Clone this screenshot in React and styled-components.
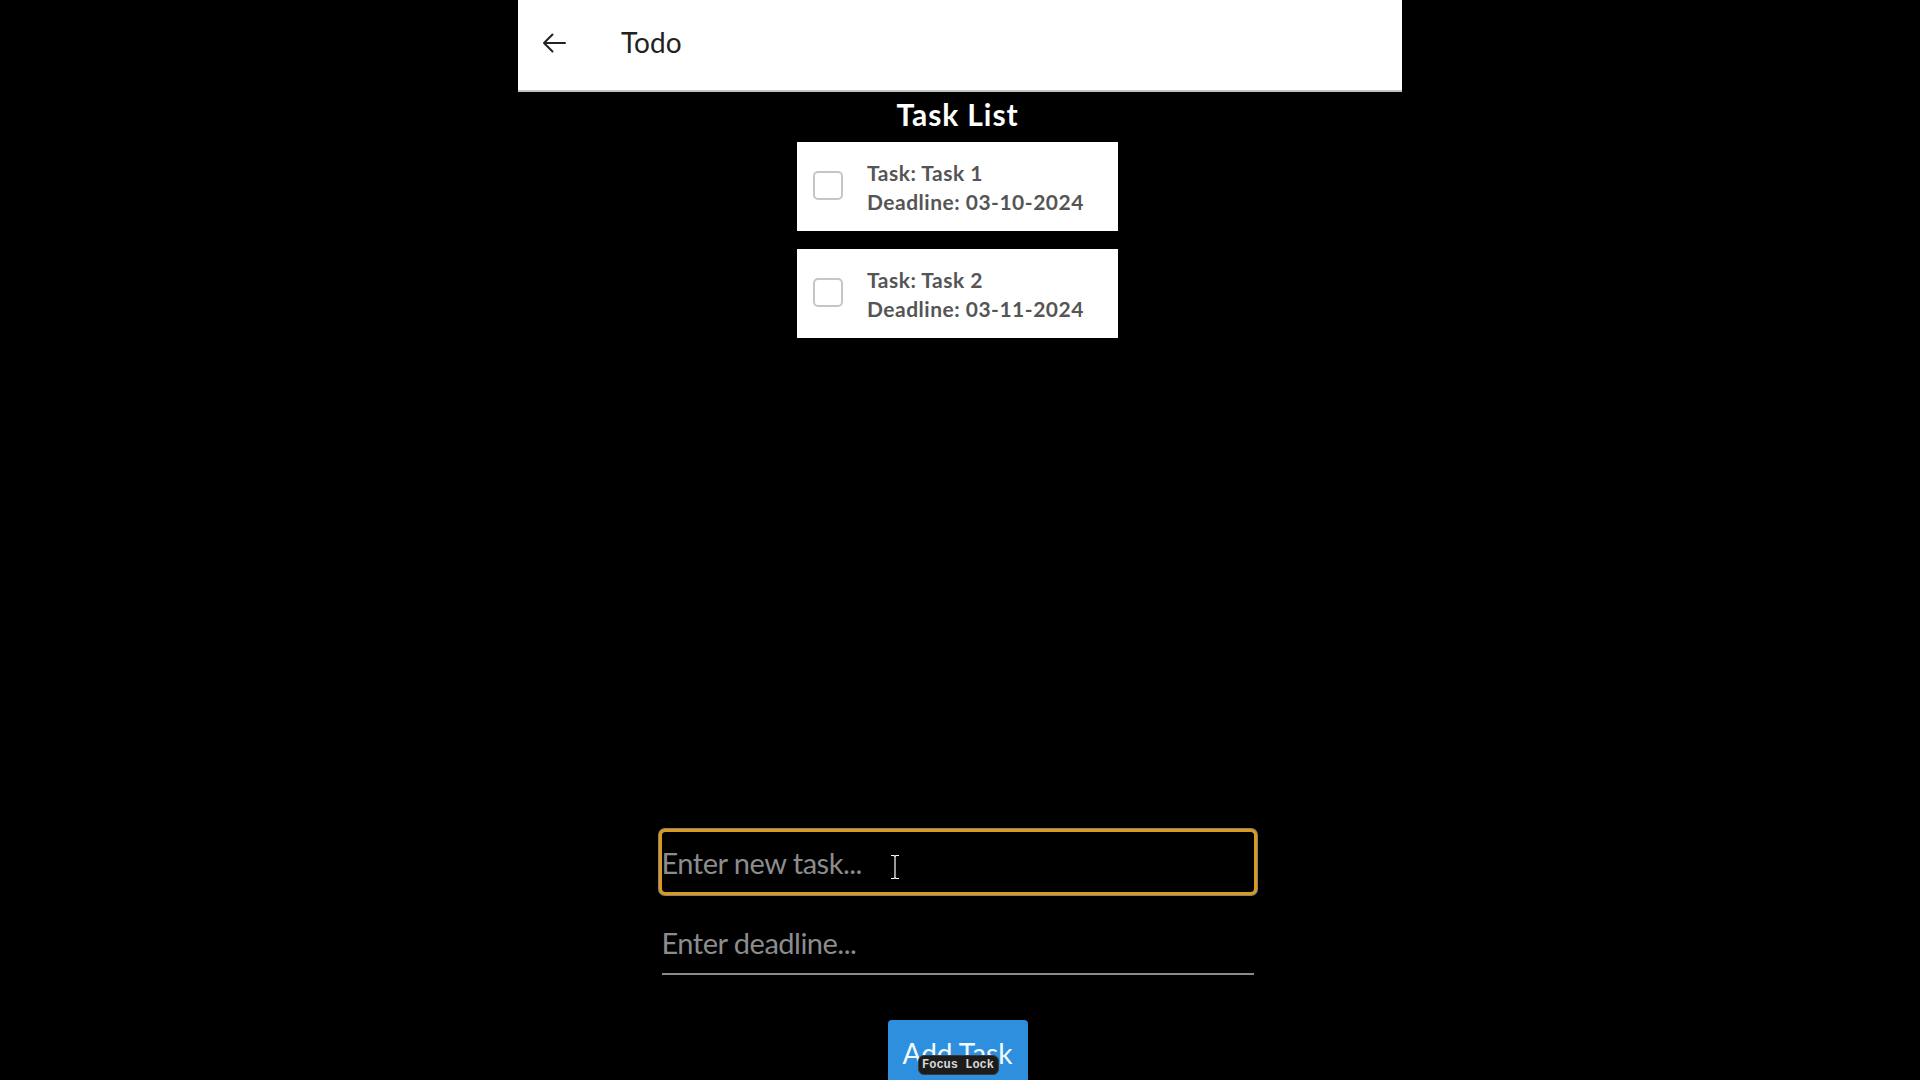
import React, { useState } from 'react';
import styled, { createGlobalStyle } from 'styled-components';

const GlobalStyle = createGlobalStyle`
  html, body {
    margin: 0;
    padding: 0;
    background: #000;
    overflow: hidden;
  }
  body {
    font-family: Lato, "Noto Sans", "Liberation Sans", sans-serif;
  }
  * {
    box-sizing: border-box;
  }
`;

const Page = styled.div`
  display: flex;
  justify-content: center;
  align-items: flex-start;
  width: 100%;
  height: 100vh;
  background: #000;
`;

const Phone = styled.div`
  width: 884px;
  flex: none;
`;

const AppBar = styled.header`
  height: 92px;
  display: flex;
  align-items: center;
  padding-left: 24px;
  background: #fff;
  border-bottom: 2px solid #c4c4c4;
`;

const BackButton = styled.button`
  display: flex;
  align-items: center;
  justify-content: center;
  width: 24px;
  height: 20px;
  padding: 0;
  margin: 0 55px 5px 0;
  border: none;
  background: none;
  cursor: pointer;
`;

const AppTitle = styled.div`
  font-size: 28px;
  line-height: 1.2;
  color: #222;
  margin-bottom: 5px;
`;

const Content = styled.main`
  display: flex;
  flex-direction: column;
  align-items: center;
  padding-right: 5px;
`;

const Title = styled.h2`
  margin: 4px 0 0;
  font-size: 30px;
  line-height: 36px;
  font-weight: 700;
  letter-spacing: 0.9px;
  color: #fff;
`;

const TaskList = styled.ul`
  list-style: none;
  margin: 0;
  padding: 10px 0 0;
  height: 700px;
  display: flex;
  flex-direction: column;
  gap: 18px;
`;

const Card = styled.li`
  width: 321px;
  height: 89px;
  flex: none;
  display: flex;
  align-items: center;
  gap: 24px;
  padding: 1px 16px 0;
  background: #fff;
`;

const Check = styled.input`
  appearance: none;
  flex: none;
  width: 30px;
  height: 29px;
  margin: 0 0 3px;
  border: 2px solid #c6c6c6;
  border-radius: 5px;
  background: #fff;
  cursor: pointer;
  &:checked {
    background: #2d8ee0;
    border-color: #2d8ee0;
  }
`;

const TaskText = styled.div`
  display: flex;
  flex-direction: column;
  font-size: 21px;
  line-height: 29px;
  font-weight: 700;
  letter-spacing: 0.5px;
  color: #555;
`;

const Form = styled.form`
  display: flex;
  flex-direction: column;
  align-items: center;
`;

const Field = styled.div`
  position: relative;
  width: 592px;
  margin-top: ${(p) => p.$gap || 0}px;
`;

const Input = styled.input`
  display: block;
  width: 100%;
  height: 60px;
  padding: 0 0 ${(p) => (p.$focused ? 0 : 4)}px;
  border: none;
  border-bottom: ${(p) => (p.$focused ? 'none' : '2px solid #8a8a8a')};
  border-radius: ${(p) => (p.$focused ? '3px' : '0')};
  outline: ${(p) => (p.$focused ? '3px solid #d99a1e' : 'none')};
  box-shadow: ${(p) => (p.$focused ? '0 0 0 4px rgba(255, 236, 200, 0.55)' : 'none')};
  background: #000;
  color: #ddd;
  font-family: Lato, "Noto Sans", sans-serif;
  font-size: 29px;
  letter-spacing: -0.5px;
  &::placeholder {
    color: #8c8c8c;
  }
`;

const Cursor = styled.svg`
  position: absolute;
  left: 228px;
  top: 22px;
  pointer-events: none;
`;

const ButtonWrap = styled.div`
  position: relative;
  margin-top: 45px;
`;

const AddButton = styled.button`
  display: block;
  width: 140px;
  padding: 16px 0;
  border: none;
  border-radius: 4px;
  background: #2e8fdf;
  color: #f2fcff;
  font-family: Lato, "Noto Sans", sans-serif;
  font-size: 28px;
  line-height: 34px;
  cursor: pointer;
`;

const FocusBadge = styled.span`
  position: absolute;
  left: 30px;
  top: 35px;
  width: 81px;
  height: 20px;
  display: flex;
  align-items: center;
  justify-content: center;
  border-radius: 6px;
  border: 1px solid #3a3a3a;
  background: #1c1c1c;
  color: #d8d8d8;
  font-family: "Liberation Mono", "DejaVu Sans Mono", monospace;
  font-size: 12px;
  font-weight: 700;
  white-space: nowrap;
`;

const tasks = [
  { id: 1, name: 'Task 1', deadline: '03-10-2024' },
  { id: 2, name: 'Task 2', deadline: '03-11-2024' },
];

export default function App() {
  const [task, setTask] = useState('');
  const [deadline, setDeadline] = useState('');

  return (
    <Page>
      <GlobalStyle />
      <Phone>
        <AppBar>
          <BackButton aria-label="back">
            <svg width="24" height="20" viewBox="0 0 24 20" fill="none" stroke="#222" strokeWidth="2" strokeLinecap="round" strokeLinejoin="round">
              <path d="M2 10H23M10.5 1.5L2 10l8.5 8.5" />
            </svg>
          </BackButton>
          <AppTitle>Todo</AppTitle>
        </AppBar>
        <Content>
          <Title>Task List</Title>
          <TaskList>
            {tasks.map((t) => (
              <Card key={t.id}>
                <Check type="checkbox" />
                <TaskText>
                  <span>Task: {t.name}</span>
                  <span>Deadline: {t.deadline}</span>
                </TaskText>
              </Card>
            ))}
          </TaskList>
          <Form onSubmit={(e) => e.preventDefault()}>
            <Field>
              <Input $focused placeholder="Enter new task..." value={task} onChange={(e) => setTask(e.target.value)} />
              <Cursor width="10" height="26" viewBox="0 0 10 26">
                <path d="M1 1.5h3l1 1 1-1h3M5 2.5v21M1 24.5h3l1-1 1 1h3" stroke="#000" strokeWidth="3" fill="none" />
                <path d="M1 1.5h3l1 1 1-1h3M5 2.5v21M1 24.5h3l1-1 1 1h3" stroke="#fff" strokeWidth="1.2" fill="none" />
              </Cursor>
            </Field>
            <Field $gap={23}>
              <Input placeholder="Enter deadline..." value={deadline} onChange={(e) => setDeadline(e.target.value)} />
            </Field>
            <ButtonWrap>
              <AddButton type="submit">Add Task</AddButton>
              <FocusBadge>Focus Lock</FocusBadge>
            </ButtonWrap>
          </Form>
        </Content>
      </Phone>
    </Page>
  );
}
